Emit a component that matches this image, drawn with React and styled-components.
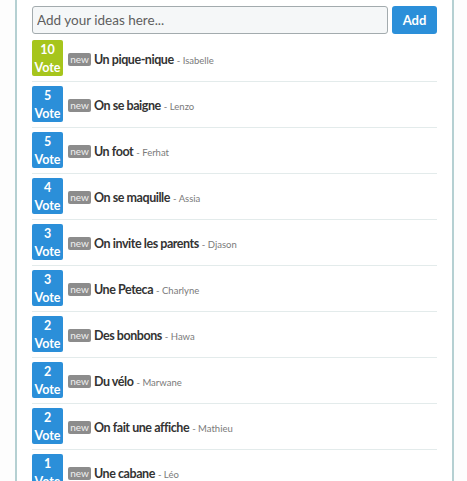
import React from "react";
import styled, { createGlobalStyle } from "styled-components";

const GlobalStyle = createGlobalStyle`
  body {
    margin: 0;
    background: #fdfdfd;
    font-family: Lato, "Open Sans", sans-serif;
  }
`;

const Panel = styled.div`
  margin-left: 15px;
  width: 405px;
  min-height: 481px;
  padding: 6px 15px 0 15px;
  background: #ffffff;
  border-left: 2px solid #b5d0d2;
  border-right: 2px solid #b5d0d2;
`;

const Form = styled.form`
  display: flex;
  gap: 4px;
  margin: 0;
`;

const Input = styled.input`
  flex: 1;
  height: 28px;
  box-sizing: border-box;
  padding: 0 4px;
  border: 1px solid #a3abae;
  border-radius: 3px;
  background: #f5f7f8;
  font-family: Lato, sans-serif;
  font-size: 13.5px;
  color: #333;
  &::placeholder {
    color: #5e5e5e;
  }
`;

const AddButton = styled.button`
  width: 45px;
  height: 28px;
  border: none;
  border-radius: 3px;
  background: #2b8fd9;
  color: #fff;
  font-family: Lato, sans-serif;
  font-weight: 700;
  font-size: 13px;
  padding: 0;
`;

const List = styled.ul`
  list-style: none;
  margin: 2px 0 0 0;
  padding: 0;
`;

const Row = styled.li`
  display: flex;
  align-items: center;
  gap: 5px;
  padding: 4px 0 5px 0;
  border-bottom: 1px solid #e3ebeb;
`;

const VoteBox = styled.div`
  width: 31px;
  height: 36px;
  flex-shrink: 0;
  display: flex;
  flex-direction: column;
  align-items: center;
  justify-content: space-between;
  padding: 1px 0 0;
  box-sizing: border-box;
  border-radius: 2px;
  background: ${({ $top }) => ($top ? "#a6c51c" : "#2b8fd9")};
  color: #fff;
  font-weight: 700;
  font-size: 12.5px;
  line-height: 17px;
`;

const Content = styled.div`
  display: flex;
  align-items: center;
  gap: 3px;
  margin-top: 2px;
`;

const Badge = styled.span`
  display: inline-flex;
  align-items: center;
  justify-content: center;
  width: 23px;
  height: 13px;
  margin-top: 1px;
  background: #8c8c8c;
  color: #f0f0f0;
  font-size: 10px;
  border-radius: 2px;
  line-height: 13px;
  flex-shrink: 0;
`;

const Title = styled.span`
  color: #333333;
  font-size: 12.5px;
  font-weight: 700;
  letter-spacing: -0.45px;
`;

const Author = styled.span`
  color: #7a7a7a;
  font-size: 9.5px;
  margin-left: 3px;
`;

const Text = styled.div`
  display: flex;
  align-items: baseline;
`;

const ideas = [
  { votes: 10, title: "Un pique-nique", author: "Isabelle" },
  { votes: 5, title: "On se baigne", author: "Lenzo" },
  { votes: 5, title: "Un foot", author: "Ferhat" },
  { votes: 4, title: "On se maquille", author: "Assia" },
  { votes: 3, title: "On invite les parents", author: "Djason" },
  { votes: 3, title: "Une Peteca", author: "Charlyne" },
  { votes: 2, title: "Des bonbons", author: "Hawa" },
  { votes: 2, title: "Du vélo", author: "Marwane" },
  { votes: 2, title: "On fait une affiche", author: "Mathieu" },
  { votes: 1, title: "Une cabane", author: "Léo" },
];

export default function App() {
  return (
    <>
      <GlobalStyle />
      <Panel>
        <Form onSubmit={(e) => e.preventDefault()}>
          <Input placeholder="Add your ideas here..." />
          <AddButton type="submit">Add</AddButton>
        </Form>
        <List>
          {ideas.map((idea, i) => (
            <Row key={i}>
              <VoteBox $top={i === 0}>
                <span>{idea.votes}</span>
                <span>Vote</span>
              </VoteBox>
              <Content>
                <Badge>new</Badge>
                <Text>
                  <Title>{idea.title}</Title>
                  <Author>- {idea.author}</Author>
                </Text>
              </Content>
            </Row>
          ))}
        </List>
      </Panel>
    </>
  );
}
